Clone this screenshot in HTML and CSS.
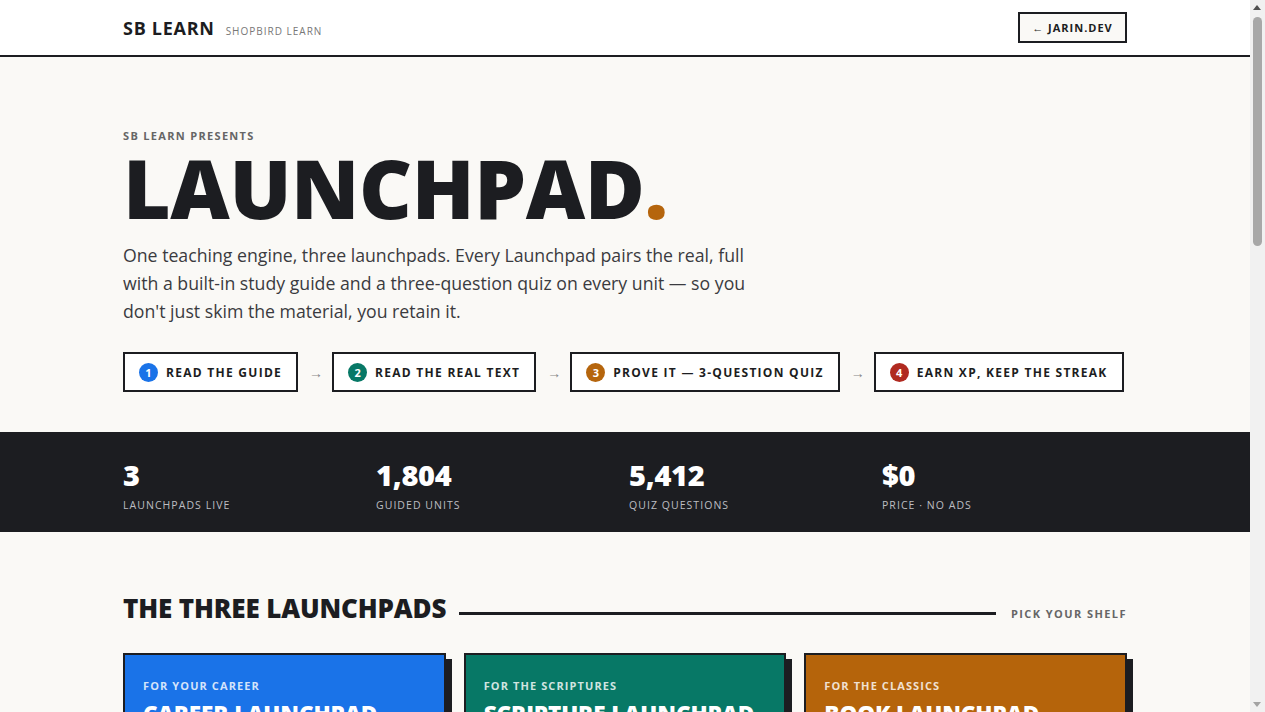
FILE: index.html
```html
<!DOCTYPE html>
<html lang="en">
<head>
<meta charset="utf-8">
<title>SB Learn — Launchpad</title>
<link rel="stylesheet" href="styles.css">
</head>
<body>
<header class="topbar">
  <div class="wrap topbar-inner">
    <div class="brand"><span class="brand-name">SB LEARN</span><span class="brand-sub">SHOPBIRD LEARN</span></div>
    <a class="back-btn" href="#">← JARIN.DEV</a>
  </div>
</header>

<section class="hero">
  <div class="wrap">
    <div class="eyebrow">SB LEARN PRESENTS</div>
    <h1 class="title">LAUNCHPAD<span class="dot">.</span></h1>
    <p class="lead">One teaching engine, three launchpads. Every Launchpad pairs the real, full with a built-in study guide and a three-question quiz on every unit — so you don't just skim the material, you retain it.</p>
    <div class="steps">
      <div class="step"><span class="num n1">1</span>READ THE GUIDE</div>
      <span class="arrow">→</span>
      <div class="step"><span class="num n2">2</span>READ THE REAL TEXT</div>
      <span class="arrow">→</span>
      <div class="step"><span class="num n3">3</span>PROVE IT — 3-QUESTION QUIZ</div>
      <span class="arrow">→</span>
      <div class="step"><span class="num n4">4</span>EARN XP, KEEP THE STREAK</div>
    </div>
  </div>
</section>

<section class="stats">
  <div class="wrap stats-grid">
    <div class="stat"><div class="stat-num">3</div><div class="stat-label">LAUNCHPADS LIVE</div></div>
    <div class="stat"><div class="stat-num">1,804</div><div class="stat-label">GUIDED UNITS</div></div>
    <div class="stat"><div class="stat-num">5,412</div><div class="stat-label">QUIZ QUESTIONS</div></div>
    <div class="stat"><div class="stat-num">$0</div><div class="stat-label">PRICE · NO ADS</div></div>
  </div>
</section>

<section class="shelf">
  <div class="wrap">
    <div class="section-head">
      <h2 class="section-title">THE THREE LAUNCHPADS</h2>
      <span class="rule"></span>
      <span class="section-note">PICK YOUR SHELF</span>
    </div>
    <div class="cards">
      <article class="card c-blue">
        <div class="card-label">FOR YOUR CAREER</div>
        <h3 class="card-title">CAREER LAUNCHPAD</h3>
        <p class="card-text">Guided units on the skills that move a career forward, each paired with a study guide and a three-question quiz.</p>
        <a class="card-link" href="#">OPEN THE SHELF →</a>
      </article>
      <article class="card c-teal">
        <div class="card-label">FOR THE SCRIPTURES</div>
        <h3 class="card-title">SCRIPTURE LAUNCHPAD</h3>
        <p class="card-text">The full text, chapter by chapter, with a built-in guide to context and meaning and a quiz on every unit.</p>
        <a class="card-link" href="#">OPEN THE SHELF →</a>
      </article>
      <article class="card c-orange">
        <div class="card-label">FOR THE CLASSICS</div>
        <h3 class="card-title">BOOK LAUNCHPAD</h3>
        <p class="card-text">Great books in their real, full text, with a study guide for every chapter and three questions to prove it.</p>
        <a class="card-link" href="#">OPEN THE SHELF →</a>
      </article>
    </div>
  </div>
</section>

<section class="more">
  <div class="wrap">
    <div class="section-head">
      <h2 class="section-title">HOW IT WORKS</h2>
      <span class="rule"></span>
      <span class="section-note">ONE ENGINE</span>
    </div>
    <p class="more-text">Every unit follows the same loop: read the guide, read the real text, prove it with a three-question quiz, and earn XP to keep your streak alive.</p>
  </div>
</section>

<footer class="footer">
  <div class="wrap footer-inner">
    <span>SB LEARN · SHOPBIRD LEARN</span>
    <span>JARIN.DEV</span>
  </div>
</footer>

<div class="scrollbar" aria-hidden="true">
  <span class="sb-up"></span>
  <span class="sb-thumb"></span>
  <span class="sb-down"></span>
</div>
</body>
</html>
```

FILE: styles.css
```css
* { box-sizing: border-box; }
html, body { margin: 0; padding: 0; }
body {
  font-family: "Open Sans", "Noto Sans", sans-serif;
  color: #1c1d21;
  background: #faf9f6;
  padding-right: 15px;
}
.wrap { width: 1004px; margin: 0 auto; }

.topbar {
  background: #fff;
  border-bottom: 2px solid #1c1d21;
}
.topbar-inner {
  height: 55px;
  display: flex;
  align-items: center;
  justify-content: space-between;
}
.brand { display: flex; align-items: baseline; gap: 11px; padding-top: 1px; }
.brand-name { font-size: 18px; font-weight: 700; letter-spacing: 0.04em; }
.brand-sub { font-size: 10px; letter-spacing: 0.1em; color: #777; }
.back-btn {
  display: flex; align-items: center; justify-content: center;
  width: 109px; height: 31px; margin-top: -1px;
  border: 2px solid #1c1d21;
  background: #faf9f6;
  font-size: 11px; font-weight: 700; letter-spacing: 0.09em;
  color: #1c1d21; text-decoration: none;
}

.hero { padding: 71px 0 40px; }
.eyebrow { font-size: 11px; line-height: 16px; font-weight: 700; letter-spacing: 0.12em; color: #666; }
.title {
  margin: 2px 0 0;
  font-size: 82px; line-height: 82px; font-weight: 800;
  letter-spacing: -0.005em;
}
.dot { color: #b5650d; }
.lead {
  margin: 13px 0 0;
  width: 632px;
  font-size: 17.7px; line-height: 28px;
  color: #3a3b40;
}
.steps { margin-top: 27px; display: flex; align-items: center; gap: 11px; }
.step {
  flex-shrink: 0;
  white-space: nowrap;
  height: 40px;
  display: flex; align-items: center; gap: 8px;
  padding: 0 14px;
  border: 2px solid #1c1d21;
  background: #fff;
  font-size: 12px; font-weight: 700; letter-spacing: 0.106em;
}
.num {
  width: 19px; height: 19px; border-radius: 50%;
  display: flex; align-items: center; justify-content: center;
  color: #fff; font-size: 11px; font-weight: 700; letter-spacing: 0;
}
.n1 { background: #1a73e8; }
.n2 { background: #077866; }
.n3 { background: #b5650d; }
.n4 { background: #b02a20; }
.arrow { color: #888; font-size: 14px; width: 12px; text-align: center; flex-shrink: 0; }

.stats { background: #1c1d21; color: #fff; padding: 26px 0 19px; }
.stats-grid { display: grid; grid-template-columns: repeat(4, 1fr); gap: 8px; }
.stat-num { font-size: 29px; line-height: 33px; font-weight: 800; letter-spacing: -0.01em; }
.stat-label { margin-top: 6px; font-size: 10.5px; line-height: 16px; letter-spacing: 0.1em; color: #bdbdc2; }

.shelf { padding: 61px 0 60px; }
.section-head { display: flex; align-items: center; gap: 13px; }
.section-title { margin: 0; font-size: 26px; line-height: 31px; font-weight: 800; letter-spacing: -0.005em; white-space: nowrap; }
.rule { flex: 1; height: 3px; background: #1c1d21; margin-top: 9px; }
.section-note { font-size: 11px; font-weight: 700; letter-spacing: 0.13em; color: #666; margin-top: 9px; padding-left: 2px; }

.cards { margin-top: 29px; display: grid; grid-template-columns: repeat(3, 1fr); gap: 18px; }
.card {
  border: 2px solid #1c1d21;
  box-shadow: 6px 6px 0 #1c1d21;
  padding: 23px 18px 26px;
  color: #fff;
  min-height: 360px;
  display: flex; flex-direction: column;
}
.c-blue { background: #1a73e8; }
.c-teal { background: #077866; }
.c-orange { background: #b5640b; }
.card-label { font-size: 11px; line-height: 16px; font-weight: 700; letter-spacing: 0.1em; color: rgba(255,255,255,0.82); }
.card-title { margin: 6px 0 0; font-size: 22.5px; line-height: 28px; font-weight: 800; letter-spacing: -0.005em; white-space: nowrap; }
.card-text { margin: 14px 0 0; font-size: 15px; line-height: 24px; color: rgba(255,255,255,0.9); flex: 1; }
.card-link { margin-top: 20px; color: #fff; text-decoration: none; font-size: 12px; font-weight: 800; letter-spacing: 0.1em; }

.more { padding: 40px 0 400px; }
.more-text { margin: 24px 0 0; width: 630px; font-size: 17px; line-height: 28px; color: #3a3b40; }

.footer { background: #1c1d21; color: #bdbdc2; padding: 28px 0; }
.footer-inner { display: flex; justify-content: space-between; font-size: 11px; letter-spacing: 0.1em; }

/* drawn scrollbar, overlaid at the right edge of the window */
.scrollbar {
  position: fixed; top: 0; right: 0; bottom: 0;
  width: 15px;
  background: #f1f1f1;
}
.sb-up, .sb-down {
  position: absolute; left: 3px;
  width: 0; height: 0;
  border-left: 4.5px solid transparent;
  border-right: 4.5px solid transparent;
}
.sb-up { top: 5px; border-bottom: 5px solid #505050; }
.sb-down { bottom: 5px; border-top: 5px solid #a3a3a3; }
.sb-thumb {
  position: absolute; left: 3px; top: 17px;
  width: 9px; height: 229px;
  border-radius: 5px;
  background: #a8a8a8;
}
```
